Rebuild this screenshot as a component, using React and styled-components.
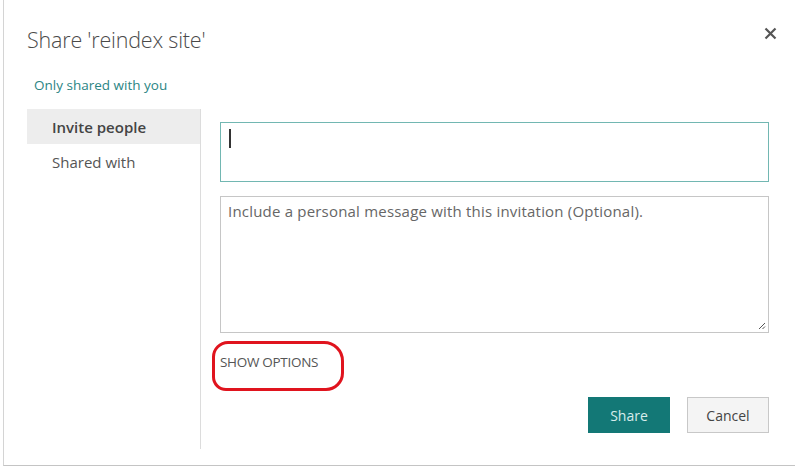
import React from 'react';
import styled, { createGlobalStyle } from 'styled-components';

const GlobalStyle = createGlobalStyle`
  html, body {
    margin: 0;
    padding: 0;
    background: #fff;
  }
  body {
    font-family: "Open Sans", "Liberation Sans", sans-serif;
    color: #444;
  }
`;

const Frame = styled.div`
  box-sizing: border-box;
  margin-left: 3px;
  width: 792px;
  height: 466px;
  border-left: 1px solid #d4d4d4;
  border-bottom: 1px solid #c4c4c4;
  position: relative;
  padding: 26px 0 0 23px;
`;

const CloseBtn = styled.button`
  position: absolute;
  top: 22px;
  right: 14px;
  width: 22px;
  height: 22px;
  padding: 0;
  border: none;
  background: none;
  display: flex;
  align-items: center;
  justify-content: center;
  cursor: pointer;
`;

const Title = styled.h1`
  margin: 0;
  font-weight: 300;
  font-size: 21.5px;
  line-height: 28px;
  color: #4a4a4a;
  letter-spacing: -0.2px;
`;

const Status = styled.div`
  margin: 22px 0 0 7px;
  font-size: 13.5px;
  line-height: 18px;
  color: #2b8584;
`;

const Body = styled.div`
  display: flex;
  margin-top: 15px;
  height: 340px;
`;

const Nav = styled.nav`
  width: 173px;
  border-right: 1px solid #dcdcdc;
  flex-shrink: 0;
`;

const NavItem = styled.div`
  height: 35px;
  display: flex;
  align-items: center;
  padding-left: 25px;
  font-size: 15px;
  font-weight: ${p => (p.active ? 600 : 400)};
  color: ${p => (p.active ? '#444' : '#555')};
  background: ${p => (p.active ? '#ededed' : 'transparent')};
`;

const Main = styled.div`
  width: 549px;
  padding: 13px 0 0 19px;
  display: flex;
  flex-direction: column;
`;

const PeopleInput = styled.div`
  box-sizing: border-box;
  height: 60px;
  border: 1px solid #72b7b2;
  position: relative;
`;

const Caret = styled.span`
  position: absolute;
  left: 8px;
  top: 6px;
  width: 2px;
  height: 19px;
  background: #333;
`;

const Message = styled.div`
  box-sizing: border-box;
  margin-top: 14px;
  height: 137px;
  border: 1px solid #c6c6c6;
  padding: 4px 7px;
  font-size: 15px;
  line-height: 20px;
  color: #666;
  letter-spacing: 0.2px;
  position: relative;
`;

const Grip = styled.svg`
  position: absolute;
  right: 2px;
  bottom: 2px;
`;

const OptionsWrap = styled.div`
  position: relative;
  margin-top: 17px;
  align-self: flex-start;
`;

const OptionsLink = styled.span`
  font-size: 13.5px;
  line-height: 20px;
  color: #555;
  letter-spacing: -0.3px;
`;

const Circle = styled.span`
  position: absolute;
  left: -8px;
  top: -9px;
  width: 126px;
  height: 44px;
  border: 3px solid #e0141e;
  border-radius: 16px 20px 18px 14px;
`;

const Actions = styled.div`
  margin-top: 25px;
  display: flex;
  justify-content: flex-end;
  gap: 17px;
`;

const Button = styled.button`
  box-sizing: border-box;
  width: 82px;
  height: 36px;
  font-family: "Open Sans", "Liberation Sans", sans-serif;
  font-size: 14px;
  border: 1px solid ${p => (p.primary ? '#137876' : '#c8c8c8')};
  background: ${p => (p.primary ? '#137876' : '#f4f4f4')};
  color: ${p => (p.primary ? '#d8ecec' : '#444')};
  cursor: pointer;
`;

export default function App() {
  return (
    <>
      <GlobalStyle />
      <Frame>
        <CloseBtn aria-label="Close">
          <svg width="13" height="13" viewBox="0 0 13 13">
            <path d="M1.5 1.5L11.5 11.5M11.5 1.5L1.5 11.5" stroke="#555" strokeWidth="2.2" />
          </svg>
        </CloseBtn>
        <Title>Share 'reindex site'</Title>
        <Status>Only shared with you</Status>
        <Body>
          <Nav>
            <NavItem active>Invite people</NavItem>
            <NavItem>Shared with</NavItem>
          </Nav>
          <Main>
            <PeopleInput>
              <Caret />
            </PeopleInput>
            <Message>
              Include a personal message with this invitation (Optional).
              <Grip width="9" height="9" viewBox="0 0 9 9">
                <path d="M8 2L2 8M8 5.5L5.5 8" stroke="#555" strokeWidth="1" />
              </Grip>
            </Message>
            <OptionsWrap>
              <OptionsLink>SHOW OPTIONS</OptionsLink>
              <Circle />
            </OptionsWrap>
            <Actions>
              <Button primary>Share</Button>
              <Button>Cancel</Button>
            </Actions>
          </Main>
        </Body>
      </Frame>
    </>
  );
}
